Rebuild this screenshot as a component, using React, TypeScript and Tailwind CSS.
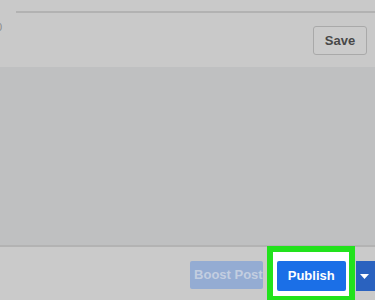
import React from 'react';

export default function App() {
  return (
    <div
      className="w-[375px] h-[300px] overflow-hidden flex flex-col bg-[#bfc0c1]"
      style={{ fontFamily: '"Liberation Sans", Arial, sans-serif' }}
    >
      {/* top composer row */}
      <div className="h-[67px] flex bg-[#c9c9c9]">
        <div className="w-[16px] shrink-0 pt-[20px] overflow-hidden">
          <span className="block -ml-[4px] text-[11px] leading-[14px] text-[#8a8a8a]">0</span>
        </div>
        <div className="flex-1 pt-[11px]">
          <div className="h-[2px] bg-[#b2b2b2]" />
          <div className="flex justify-end pr-[8px] pt-[13px]">
            <button className="w-[54px] h-[29px] rounded-[3px] border border-[#a9a9a9] bg-[#cbcbcb] text-[13px] font-bold text-[#484848]">
              Save
            </button>
          </div>
        </div>
      </div>

      {/* empty body */}
      <div className="flex-1 border-b-2 border-[#b3b3b3]" />

      {/* bottom action bar */}
      <div className="h-[53px] shrink-0 flex items-start pl-[190px] bg-[#cacaca]">
        <button className="mt-[14px] w-[76px] h-[28px] pl-[4px] rounded-[2px] bg-[#94acd3] text-[13px] font-bold text-[#c3cee0] whitespace-nowrap">
          Boost Post
        </button>
        <div className="ml-[4px] -mt-[1px] border-[6px] border-[#22e21c] bg-white pt-[9px] pl-[4px] pr-[3px] pb-[5px]">
          <button className="w-[69px] h-[30px] rounded-[2px] bg-[#1b6fe7] text-[13px] font-bold text-white">
            Publish
          </button>
        </div>
        <button className="ml-[1px] mt-[14px] w-[20px] h-[30px] bg-[#2a62bf] flex items-center justify-start pl-[4px]">
          <svg width="9" height="5" viewBox="0 0 9 5">
            <path d="M0 0 H9 L4.5 5 Z" fill="#ffffff" />
          </svg>
        </button>
      </div>
    </div>
  );
}
